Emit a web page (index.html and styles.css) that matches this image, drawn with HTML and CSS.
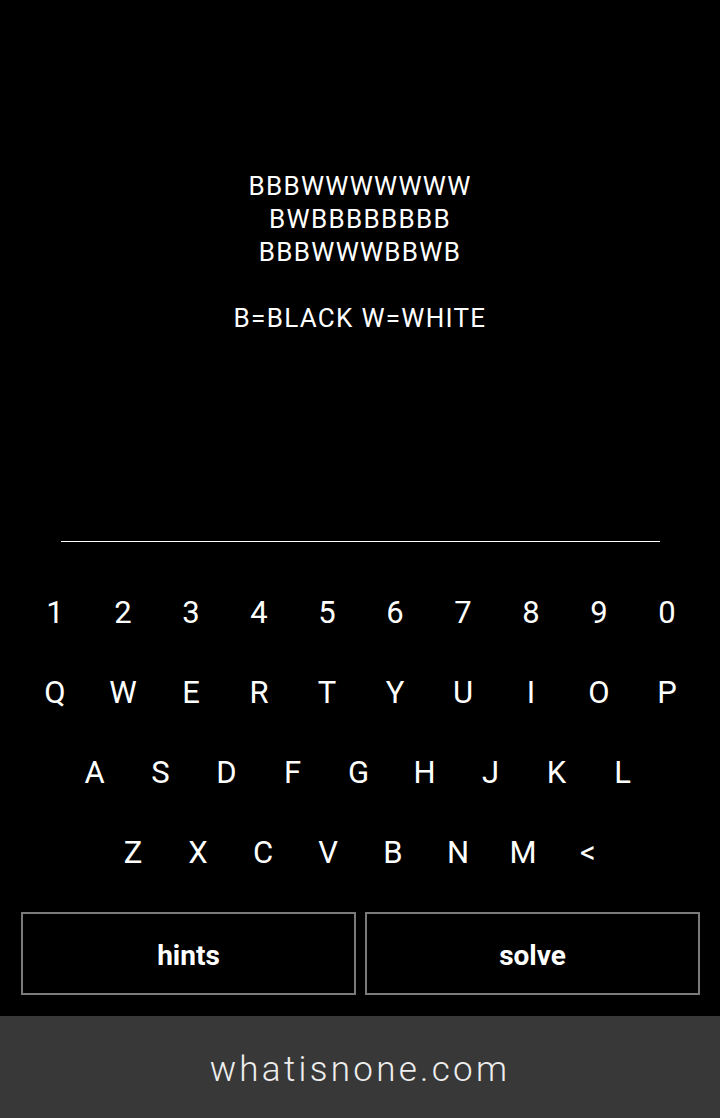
FILE: index.html
```html
<!DOCTYPE html>
<html>
<head>
<meta charset="utf-8">
<link rel="stylesheet" href="styles.css">
</head>
<body>
<div class="app">
  <div class="puzzle">
    <div>BBBWWWWWWW</div>
    <div>BWBBBBBBBB</div>
    <div>BBBWWWBBWB</div>
    <div class="blank">&nbsp;</div>
    <div>B=BLACK W=WHITE</div>
  </div>
  <div class="answer"></div>
  <div class="keyboard">
    <div class="row r1"><span>1</span><span>2</span><span>3</span><span>4</span><span>5</span><span>6</span><span>7</span><span>8</span><span>9</span><span>0</span></div>
    <div class="row r2"><span>Q</span><span>W</span><span>E</span><span>R</span><span>T</span><span>Y</span><span>U</span><span>I</span><span>O</span><span>P</span></div>
    <div class="row r3"><span>A</span><span>S</span><span>D</span><span>F</span><span>G</span><span>H</span><span>J</span><span>K</span><span>L</span></div>
    <div class="row r4"><span>Z</span><span>X</span><span>C</span><span>V</span><span>B</span><span>N</span><span>M</span><span>&lt;</span></div>
  </div>
  <div class="actions">
    <div class="btn">hints</div>
    <div class="btn">solve</div>
  </div>
  <div class="footer">whatisnone.com</div>
</div>
</body>
</html>
```
FILE: styles.css
```css
html, body {
  margin: 0;
  padding: 0;
  background: #000;
}
body {
  font-family: Roboto, "Liberation Sans", sans-serif;
  color: #fff;
}
.app {
  width: 720px;
  height: 1118px;
  display: flex;
  flex-direction: column;
}
.puzzle {
  flex-shrink: 0;
  padding-top: 170px;
  text-align: center;
  font-size: 26px;
  letter-spacing: 1.3px;
  line-height: 33px;
  height: 541px;
  box-sizing: border-box;
}
.answer {
  flex-shrink: 0;
  margin: 0 60px 0 61px;
  height: 1px;
  background: #fff;
}
.keyboard {
  flex-shrink: 0;
  padding-top: 30px;
  display: flex;
  flex-direction: column;
}
.row {
  display: flex;
  justify-content: center;
  height: 80px;
  align-items: center;
  font-size: 31px;
}
.row span {
  text-align: center;
}
.r1 span, .r2 span { width: 68px; }
.r3 span { width: 66px; }
.r4 span { width: 65px; }
.r1, .r2 { padding-left: 2px; }
.r3 { padding-right: 3px; }
.r4 { padding-left: 1px; }
.actions {
  flex-shrink: 0;
  display: flex;
  gap: 9px;
  padding: 0 20px 0 21px;
  margin-top: 20px;
}
.btn {
  flex: 1;
  height: 83px;
  box-sizing: border-box;
  border: 2px solid #7a7a7a;
  display: flex;
  align-items: center;
  justify-content: center;
  padding-top: 3px;
  font-weight: bold;
  font-size: 28px;
}
.footer {
  margin-top: auto;
  height: 102px;
  box-sizing: border-box;
  padding-top: 5px;
  background: #383838;
  display: flex;
  align-items: center;
  justify-content: center;
  font-weight: 300;
  font-size: 35px;
  letter-spacing: 3.3px;
  color: #eee;
}
```
